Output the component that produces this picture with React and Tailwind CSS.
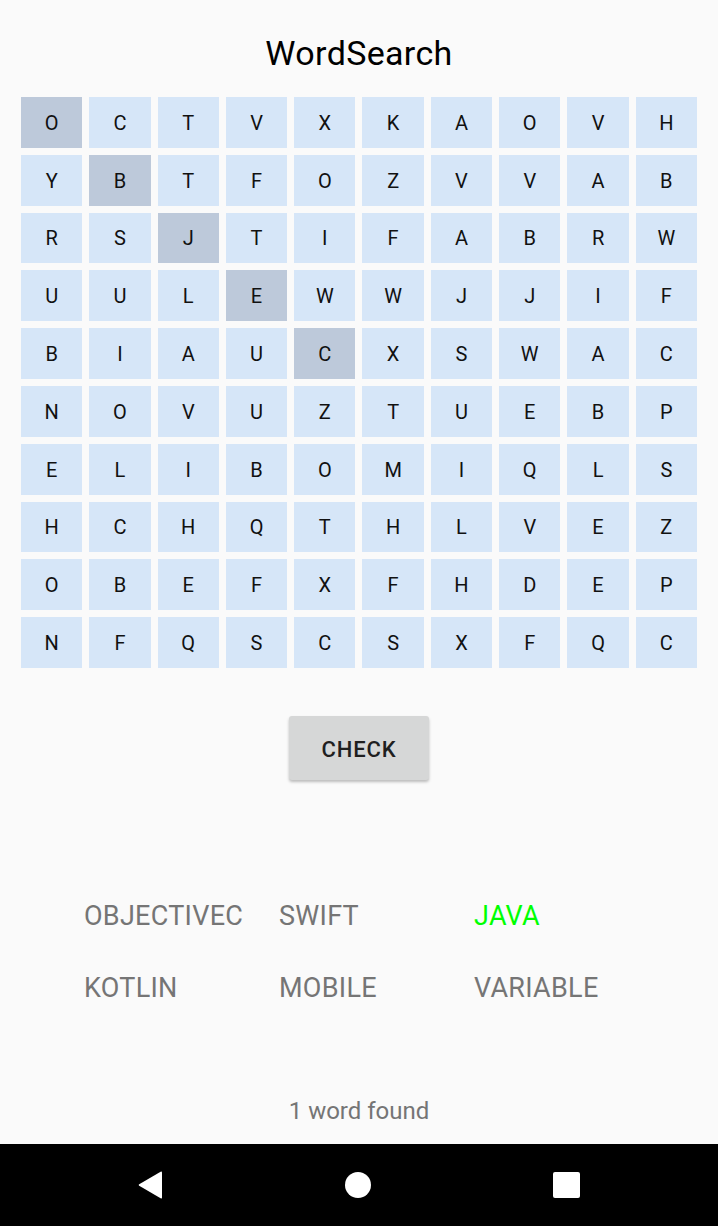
import React from "react";

const ROWS = [
  "OCTVXKAOVH",
  "YBTFOZVVAB",
  "RSJTIFABRW",
  "UULEWWJJIF",
  "BIAUCXSWAC",
  "NOVUZTUEBP",
  "ELIBOMIQLS",
  "HCHQTHLVEZ",
  "OBEFXFHDEP",
  "NFQSCSXFQC",
];

const WORDS = [
  { w: "OBJECTIVEC", found: false },
  { w: "SWIFT", found: false },
  { w: "JAVA", found: true },
  { w: "KOTLIN", found: false },
  { w: "MOBILE", found: false },
  { w: "VARIABLE", found: false },
];

export default function App() {
  return (
    <div
      className="w-[718px] h-[1226px] bg-[#fafafa] flex flex-col overflow-hidden"
      style={{ fontFamily: "Roboto, 'Liberation Sans', sans-serif" }}
    >
      <div className="h-[97px] pt-[33px] text-center text-[34px] leading-[40px] tracking-[0.01em] text-black">
        WordSearch
      </div>
      <div className="ml-[21px] w-[676px] h-[571px] grid grid-cols-10 grid-rows-10 gap-[7px]">
        {ROWS.map((row, r) =>
          row.split("").map((ch, c) => (
            <div
              key={r + "-" + c}
              className={
                "flex items-center justify-center pt-[1px] text-[20px] text-[#111] " +
                (r === c && r < 5 ? "bg-[#bdc9da]" : "bg-[#d6e6f8]")
              }
            >
              {ch}
            </div>
          ))
        )}
      </div>
      <div className="flex justify-center mt-[48px]">
        <div className="w-[140px] h-[64px] pt-[2px] bg-[#d6d7d7] rounded-[3px] shadow-[0_2px_3px_rgba(0,0,0,0.25)] flex items-center justify-center text-[22px] font-medium tracking-[0.04em] text-[#1f1f1f]">
          CHECK
        </div>
      </div>
      <div className="mt-[100px] pl-[84px] grid grid-cols-[195px_195px_195px]">
        {WORDS.map((it) => (
          <div
            key={it.w}
            className={
              "h-[72px] flex items-center text-[27px] tracking-[0.01em] " +
              (it.found ? "text-[#00ff00]" : "text-[#757575]")
            }
          >
            {it.w}
          </div>
        ))}
      </div>
      <div className="mt-[72px] text-center text-[24px] leading-[30px] text-[#757575]">
        1 word found
      </div>
      <div className="mt-auto h-[82px] bg-black flex items-center justify-center gap-[182px]">
        <svg width="25" height="28" viewBox="0 0 25 28">
          <path d="M24 1.5 L24 26.5 Q24 28 22.6 27.2 L1.2 14.8 Q0 14 1.2 13.2 L22.6 0.8 Q24 0 24 1.5 Z" fill="white" />
        </svg>
        <div className="w-[26px] h-[26px] rounded-full bg-white" />
        <div className="w-[27px] h-[26px] rounded-[2px] bg-white" />
      </div>
    </div>
  );
}
